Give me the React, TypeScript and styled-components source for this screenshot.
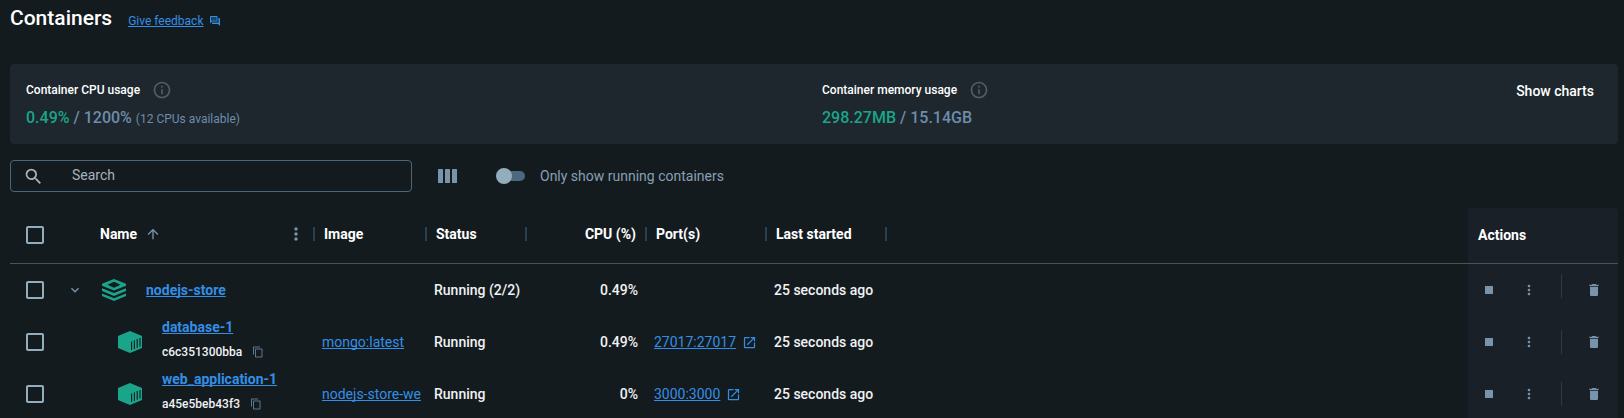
import React from "react";
import styled, { createGlobalStyle, css } from "styled-components";
import {
  MdSearch,
  MdInfoOutline,
  MdArrowUpward,
  MdMoreVert,
  MdExpandMore,
  MdStop,
  MdDelete,
  MdContentCopy,
  MdOpenInNew,
} from "react-icons/md";

const color = {
  page: "#141b1f",
  panel: "#1d272d",
  actions: "#192027",
  text: "#ffffff",
  cell: "#f0f2f4",
  muted: "#7794ab",
  mutedText: "#6e8cab",
  label: "#86a0b4",
  placeholder: "#a5b3bd",
  link: "#338ee6",
  green: "#1aa58a",
  box: "#94adbd",
  field: "#4a6780",
  rule: "#515151",
  separator: "#2b404e",
};

const GlobalStyle = createGlobalStyle`
  *, *::before, *::after { box-sizing: border-box; }
  html { scrollbar-width: none; background: ${color.page}; }
  body {
    margin: 0;
    background: ${color.page};
    color: ${color.text};
    font-family: Roboto, "Liberation Sans", sans-serif;
    font-size: 14px;
    line-height: 20px;
  }
  svg { display: block; flex: none; }
`;

const Page = styled.main`
  padding: 6px 6px 0 10px;
`;

const Header = styled.header`
  display: flex;
  align-items: baseline;
  gap: 16px;
  height: 24px;
  margin-bottom: 34px;
`;

const Title = styled.h1`
  margin: 0;
  font-size: 21px;
  line-height: 24px;
  font-weight: 500;
`;

const Link = styled.a<{ $strong?: boolean; $small?: boolean }>`
  color: ${color.link};
  font-size: ${(p) => (p.$small ? 12 : 14)}px;
  font-weight: ${(p) => (p.$strong ? 700 : 400)};
  text-decoration: underline;
  text-decoration-thickness: 1px;
  text-decoration-skip-ink: none;
  text-underline-offset: 1px;
`;

const LinkGroup = styled.span<{ $gap: number }>`
  display: flex;
  align-items: center;
  gap: ${(p) => p.$gap}px;
  color: ${color.link};
`;

const Usage = styled.section`
  display: grid;
  grid-template-columns: 1fr 1fr;
  padding: 16px 0 14px 16px;
  margin-bottom: 16px;
  border-radius: 4px;
  background: ${color.panel};
`;

const UsageHalf = styled.div`
  display: flex;
  justify-content: space-between;
  align-items: flex-start;
  padding-right: 16px;
`;

const Metric = styled.div`
  display: grid;
  gap: 6px;
`;

const MetricLabel = styled.div`
  display: flex;
  align-items: center;
  gap: 12px;
  font-size: 12px;
  font-weight: 500;
  svg { color: #525d66; }
`;

const MetricValue = styled.div`
  font-size: 16px;
  line-height: 24px;
  font-weight: 500;
  color: ${color.mutedText};
  strong { font-weight: 500; color: ${color.green}; }
  small { font-size: 12px; line-height: 16px; font-weight: 400; }
`;

const TextButton = styled.button`
  padding: 0 8px;
  border: 0;
  background: none;
  color: ${color.text};
  font: 500 14px/22px Roboto, "Liberation Sans", sans-serif;
`;

const Toolbar = styled.div`
  display: flex;
  align-items: center;
  margin-bottom: 16px;
`;

const SearchField = styled.label`
  display: flex;
  align-items: center;
  gap: 28px;
  width: 25%;
  height: 32px;
  padding: 0 12px;
  border: 1px solid ${color.field};
  border-radius: 4px;
  color: ${color.placeholder};
`;

const SearchInput = styled.input`
  flex: 1;
  min-width: 0;
  padding: 0 0 2px;
  border: 0;
  outline: 0;
  background: none;
  color: ${color.text};
  font: 400 14px/20px Roboto, "Liberation Sans", sans-serif;
  &::placeholder { color: ${color.placeholder}; opacity: 1; }
`;

const IconButton = styled.button<{ $size?: number }>`
  display: flex;
  align-items: center;
  justify-content: center;
  flex: none;
  width: ${(p) => p.$size ?? 32}px;
  height: ${(p) => p.$size ?? 32}px;
  padding: 0;
  border: 0;
  background: none;
  color: ${color.muted};
`;

const ColumnsButton = styled(IconButton)`
  margin: 0 32px 0 20px;
`;

const SwitchLabel = styled.label`
  display: flex;
  align-items: center;
  gap: 15px;
  color: ${color.label};
`;

const SwitchInput = styled.input`
  appearance: none;
  display: flex;
  align-items: center;
  width: 29px;
  height: 16px;
  margin: 0;
  border-radius: 8px;
  position: relative;
  &::before {
    content: "";
    position: absolute;
    inset: 3px 0 3px 6px;
    border-radius: 5px;
    background: #4c6780;
  }
  &::after {
    content: "";
    position: relative;
    width: 16px;
    height: 16px;
    border-radius: 50%;
    background: #94adbd;
  }
`;

const TableScroll = styled.div`
  overflow-x: auto;
  scrollbar-width: none;
`;

const Table = styled.table`
  width: 100%;
  min-width: 1040px;
  table-layout: fixed;
  border-collapse: separate;
  border-spacing: 0;
`;

const Col = styled.col<{ $w?: number }>`
  ${(p) => p.$w && css`width: ${p.$w}px;`}
`;

const Th = styled.th<{ $actions?: boolean; $inset?: number }>`
  height: 56px;
  padding: 0 0 2px ${(p) => p.$inset ?? 9}px;
  border-bottom: 1px solid ${color.rule};
  font-weight: 700;
  text-align: left;
  white-space: nowrap;
  ${(p) =>
    p.$actions &&
    css`
      background: ${color.actions};
      border-top-right-radius: 4px;
    `}
`;

const HeadCell = styled.div<{ $end?: boolean }>`
  display: flex;
  align-items: center;
  justify-content: ${(p) => (p.$end ? "flex-end" : "space-between")};
  gap: 9px;
  padding-bottom: 2px;
`;

const SortLabel = styled.span`
  display: flex;
  align-items: center;
  gap: 8px;
  flex: 1;
  svg { color: ${color.muted}; }
`;

const Separator = styled.span`
  width: 2px;
  height: 14px;
  background: ${color.separator};
`;

const Td = styled.td<{ $actions?: boolean; $end?: boolean; $inset?: number }>`
  height: 52px;
  padding: 0 ${(p) => (p.$end ? 9 : 0)}px 0 ${(p) => p.$inset ?? 7}px;
  overflow: hidden;
  color: ${color.cell};
  font-weight: 500;
  text-align: ${(p) => (p.$end ? "right" : "left")};
  white-space: nowrap;
  ${(p) => p.$actions && css`background: ${color.actions};`}
`;

const CheckBox = styled.input`
  appearance: none;
  display: block;
  width: 18px;
  height: 18px;
  margin: 0;
  border: 2px solid ${color.box};
  border-radius: 2px;
`;

const NameCell = styled.div<{ $child?: boolean }>`
  display: flex;
  align-items: center;
  gap: 20px;
  padding-left: ${(p) => (p.$child ? 28 : 12)}px;
  color: ${color.green};
`;

const NameStack = styled.div`
  display: grid;
  gap: 5px;
  margin-bottom: 5px;
`;

const ContainerId = styled.div`
  display: flex;
  align-items: center;
  gap: 8px;
  color: ${color.cell};
  font-size: 12px;
  font-weight: 500;
  button { color: #5d778c; }
`;

const Actions = styled.div`
  display: flex;
  align-items: center;
`;

const MoreButton = styled(IconButton)`
  margin: 0 16px 0 8px;
`;

const ActionDivider = styled.span<{ $raised?: boolean }>`
  width: 1px;
  height: 24px;
  margin-right: 16px;
  margin-bottom: ${(p) => (p.$raised ? 8 : 0)}px;
  background: #2e3942;
`;

const FeedbackIcon = () => (
  <svg width="12" height="12" viewBox="0 0 24 24" fill="currentColor" aria-hidden="true">
    <path opacity="0.35" d="M4 4h11v7H4z" />
    <path d="M16 13c.55 0 1-.45 1-1V3c0-.55-.45-1-1-1H3c-.55 0-1 .45-1 1v14l4-4h10zm-12-2V4h11v7H4z" />
    <path d="M21 6h-2v9H6v2c0 .55.45 1 1 1h11l4 4V7c0-.55-.45-1-1-1z" />
  </svg>
);

const ColumnsIcon = () => (
  <svg width="20" height="14" viewBox="0 0 20 14" fill="currentColor" aria-hidden="true">
    <rect x="0" y="0" width="5" height="14" rx="0.6" />
    <rect x="7" y="0" width="5" height="14" rx="0.6" />
    <rect x="14" y="0" width="5" height="14" rx="0.6" />
  </svg>
);

const StackIcon = () => (
  <svg width="24" height="22" viewBox="0 0 24 22" fill="currentColor" aria-hidden="true">
    <path fillRule="evenodd" d="M12 0 24 4.8v2L12 11.6 0 6.8v-2L12 0zm0 2.8L5.4 5.8 12 8.8l6.6-3L12 2.8z" />
    <path d="M0 9.3 12 14.1 24 9.3v2.6L12 16.9 0 11.9V9.3z" />
    <path d="M0 14.4 12 19.2 24 14.4V17L12 22 0 17v-2.6z" />
  </svg>
);

const CubeIcon = () => (
  <svg width="24" height="22" viewBox="0 0 24 22" aria-hidden="true">
    <path fill="currentColor" d="M12 0 24 5v12l-12 5L0 17V5L12 0z" />
    <g stroke={color.page} strokeWidth="1.1" fill="none">
      <path d="M13.6 10.4v8.6M16.4 9.2v8.7M19.2 8v8.7M22 6.9v8.6" />
    </g>
  </svg>
);

type Row = {
  name: string;
  id?: string;
  image?: string;
  status: string;
  cpu: string;
  port?: string;
  started: string;
};

const rows: Row[] = [
  { name: "nodejs-store", status: "Running (2/2)", cpu: "0.49%", started: "25 seconds ago" },
  {
    name: "database-1",
    id: "c6c351300bba",
    image: "mongo:latest",
    status: "Running",
    cpu: "0.49%",
    port: "27017:27017",
    started: "25 seconds ago",
  },
  {
    name: "web_application-1",
    id: "a45e5beb43f3",
    image: "nodejs-store-we",
    status: "Running",
    cpu: "0%",
    port: "3000:3000",
    started: "25 seconds ago",
  },
];

function ContainerRow({ row }: { row: Row }) {
  const child = Boolean(row.id);
  return (
    <tr>
      <Td $inset={16}>
        <CheckBox type="checkbox" aria-label={`Select ${row.name}`} />
      </Td>
      <Td>
        {!child && (
          <IconButton $size={16} aria-label={`Collapse ${row.name}`}>
            <MdExpandMore size={16} />
          </IconButton>
        )}
      </Td>
      <Td $inset={0}>
        <NameCell $child={child}>
          {child ? <CubeIcon /> : <StackIcon />}
          {child ? (
            <NameStack>
              <Link href="#" $strong>{row.name}</Link>
              <ContainerId>
                {row.id}
                <IconButton $size={16} aria-label="Copy container ID">
                  <MdContentCopy size={12} />
                </IconButton>
              </ContainerId>
            </NameStack>
          ) : (
            <Link href="#" $strong>{row.name}</Link>
          )}
        </NameCell>
      </Td>
      <Td>{row.image && <Link href="#">{row.image}</Link>}</Td>
      <Td>{row.status}</Td>
      <Td $end>{row.cpu}</Td>
      <Td>
        {row.port && (
          <LinkGroup $gap={6}>
            <Link href="#">{row.port}</Link>
            <MdOpenInNew size={15} />
          </LinkGroup>
        )}
      </Td>
      <Td>{row.started}</Td>
      <Td />
      <Td $actions $inset={5}>
        <Actions>
          <IconButton aria-label="Stop"><MdStop size={16} /></IconButton>
          <MoreButton aria-label="More actions"><MdMoreVert size={16} /></MoreButton>
          <ActionDivider $raised={!child} />
          <IconButton aria-label="Delete"><MdDelete size={16} /></IconButton>
        </Actions>
      </Td>
    </tr>
  );
}

export default function App() {
  return (
    <>
      <GlobalStyle />
      <Page>
        <Header>
          <Title>Containers</Title>
          <LinkGroup $gap={6}>
            <Link href="#" $small>Give feedback</Link>
            <FeedbackIcon />
          </LinkGroup>
        </Header>

        <Usage>
          <UsageHalf>
            <Metric>
              <MetricLabel>Container CPU usage <MdInfoOutline size={20} /></MetricLabel>
              <MetricValue>
                <strong>0.49%</strong> / 1200% <small>(12 CPUs available)</small>
              </MetricValue>
            </Metric>
          </UsageHalf>
          <UsageHalf>
            <Metric>
              <MetricLabel>Container memory usage <MdInfoOutline size={20} /></MetricLabel>
              <MetricValue><strong>298.27MB</strong> / 15.14GB</MetricValue>
            </Metric>
            <TextButton>Show charts</TextButton>
          </UsageHalf>
        </Usage>

        <Toolbar>
          <SearchField>
            <MdSearch size={21} />
            <SearchInput type="text" placeholder="Search" aria-label="Search" />
          </SearchField>
          <ColumnsButton aria-label="Choose columns"><ColumnsIcon /></ColumnsButton>
          <SwitchLabel>
            <SwitchInput type="checkbox" role="switch" />
            Only show running containers
          </SwitchLabel>
        </Toolbar>

        <TableScroll>
          <Table>
            <colgroup>
              <Col $w={50} />
              <Col $w={30} />
              <Col $w={225} />
              <Col $w={112} />
              <Col $w={100} />
              <Col $w={120} />
              <Col $w={120} />
              <Col $w={120} />
              <Col />
              <Col $w={150} />
            </colgroup>
            <thead>
              <tr>
                <Th $inset={16}><CheckBox type="checkbox" aria-label="Select all" /></Th>
                <Th />
                <Th $inset={10}>
                  <HeadCell>
                    <SortLabel>Name <MdArrowUpward size={16} /></SortLabel>
                    <IconButton $size={16} aria-label="Name column menu"><MdMoreVert size={20} /></IconButton>
                    <Separator />
                  </HeadCell>
                </Th>
                <Th><HeadCell>Image<Separator /></HeadCell></Th>
                <Th><HeadCell>Status<Separator /></HeadCell></Th>
                <Th><HeadCell $end>CPU (%)<Separator /></HeadCell></Th>
                <Th><HeadCell>Port(s)<Separator /></HeadCell></Th>
                <Th><HeadCell>Last started<Separator /></HeadCell></Th>
                <Th />
                <Th $actions $inset={10}>Actions</Th>
              </tr>
            </thead>
            <tbody>
              {rows.map((row) => <ContainerRow key={row.name} row={row} />)}
            </tbody>
          </Table>
        </TableScroll>
      </Page>
    </>
  );
}
